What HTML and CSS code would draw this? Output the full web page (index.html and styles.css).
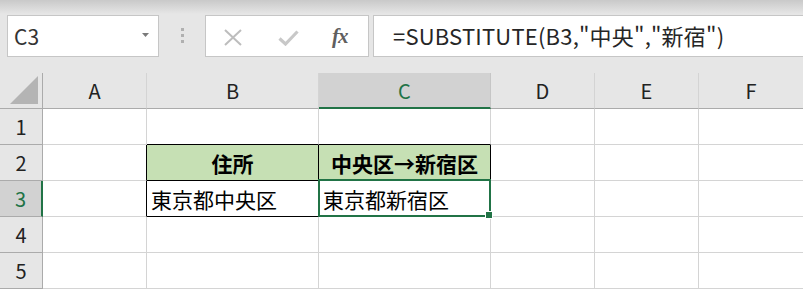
FILE: index.html
```html
<!DOCTYPE html>
<html lang="ja">
<head>
<meta charset="utf-8">
<link rel="stylesheet" href="styles.css">
</head>
<body>
<div class="toolbar">
  <div class="namebox">
    <span class="name">C3</span>
    <svg class="caret" width="7" height="4" viewBox="0 0 7 4"><path d="M0 0h7L3.5 4z" fill="#7a7a7a"/></svg>
  </div>
  <div class="grip"><i></i><i></i><i></i></div>
  <div class="buttons">
    <svg class="btn-x" width="20" height="17" viewBox="0 0 20 17"><path d="M2 1L18 16M18 1L2 16" stroke="#bdbdbd" stroke-width="2" fill="none"/></svg>
    <svg class="btn-ok" width="21" height="16" viewBox="0 0 21 16"><path d="M1.5 8.5L7.5 14L19.5 1.5" stroke="#c8c8c8" stroke-width="3.2" fill="none"/></svg>
    <span class="fx">fx</span>
  </div>
  <div class="formula">=SUBSTITUTE(B3,"中央","新宿")</div>
</div>
<div class="sheet">
  <div class="hd corner"><svg width="30" height="30" viewBox="0 0 30 30"><path d="M29 1V29H1z" fill="#b4b4b4"/></svg></div>
  <div class="hd col">A</div>
  <div class="hd col">B</div>
  <div class="hd col sel-col">C</div>
  <div class="hd col">D</div>
  <div class="hd col">E</div>
  <div class="hd col">F</div>

  <div class="hd row">1</div>
  <div class="c"></div>
  <div class="c bb"></div>
  <div class="c bb"></div>
  <div class="c"></div>
  <div class="c"></div>
  <div class="c"></div>

  <div class="hd row">2</div>
  <div class="c br"></div>
  <div class="c t head">住所</div>
  <div class="c t head">中央区→新宿区</div>
  <div class="c"></div>
  <div class="c"></div>
  <div class="c"></div>

  <div class="hd row sel-row">3</div>
  <div class="c br"></div>
  <div class="c t val">東京都中央区</div>
  <div class="c t val active">東京都新宿区<span class="handle"></span></div>
  <div class="c"></div>
  <div class="c"></div>
  <div class="c"></div>

  <div class="hd row">4</div>
  <div class="c"></div>
  <div class="c"></div>
  <div class="c"></div>
  <div class="c"></div>
  <div class="c"></div>
  <div class="c"></div>

  <div class="hd row">5</div>
  <div class="c"></div>
  <div class="c"></div>
  <div class="c"></div>
  <div class="c"></div>
  <div class="c"></div>
  <div class="c"></div>
</div>
</body>
</html>
```
FILE: styles.css
```css
* { box-sizing: border-box; }
html, body { margin: 0; padding: 0; }
body {
  width: 803px;
  height: 289px;
  overflow: hidden;
  background: linear-gradient(#c9c9c9 0px, #e6e6e6 14px, #e6e6e6 100%);
  font-family: "Noto Sans CJK JP", "Noto Sans", sans-serif;
}
.toolbar {
  display: flex;
  align-items: center;
  height: 73px;
  padding: 0 0 0 7px;
}
.namebox {
  width: 152px;
  height: 42px;
  background: #fff;
  border: 1px solid #c6c6c6;
  display: flex;
  align-items: center;
  justify-content: space-between;
  padding: 0 9px 0 6px;
  margin-top: -1px;
}
.name { font-size: 21px; color: #333; line-height: 1; }
.caret { margin-top: -2px; }
.grip {
  width: 46px;
  display: flex;
  flex-direction: column;
  align-items: center;
  gap: 3px;
  margin-top: -2px;
}
.grip i { display: block; width: 3px; height: 3px; background: #b0b0b0; }
.buttons {
  width: 164px;
  height: 42px;
  background: #fff;
  border: 1px solid #c6c6c6;
  display: flex;
  align-items: center;
  padding: 0 0 0 17px;
  margin-top: -1px;
}
.btn-x { margin-top: 3px; }
.btn-ok { margin-left: 35px; margin-top: 3px; }
.fx {
  margin-left: 33px;
  font-family: "Liberation Serif", "DejaVu Serif", serif;
  font-style: italic;
  font-weight: bold;
  font-size: 21px;
  color: #5f5f5f;
  letter-spacing: -1px;
}
.formula {
  flex: 1;
  height: 42px;
  margin-left: 4px;
  background: #fff;
  border: 1px solid #c6c6c6;
  border-right: none;
  font-size: 22px;
  letter-spacing: 0.2px;
  color: #262626;
  line-height: 38px;
  padding-left: 19px;
  white-space: nowrap;
  margin-top: -1px;
}
.sheet {
  display: grid;
  grid-template-columns: 43px 104px 172px 172px 104px 104px 104px;
  grid-template-rows: repeat(6, 36px);
}
.hd {
  background: #e6e6e6;
  border-right: 1px solid #ababab;
  border-bottom: 1px solid #ababab;
  display: flex;
  align-items: center;
  justify-content: center;
  font-size: 20px;
  color: #222;
}
.col { border-right-color: #d4d4d4; border-top: 0; }
.col:nth-child(7) { border-right: 0; }
.corner { align-items: flex-end; justify-content: flex-end; padding: 0 3px 3px 0; }
.sel-col {
  background: #d2d2d2;
  color: #217346;
  border-bottom: 2px solid #217346;
  border-right-color: #c6c6c6;
}
.row { border-bottom-color: #ababab; }
.sel-row {
  background: #d2d2d2;
  color: #217346;
  border-right: 2px solid #217346;
}
.c {
  background: #fff;
  border-right: 1px solid #d4d4d4;
  border-bottom: 1px solid #d4d4d4;
  font-size: 21px;
  color: #000;
  display: flex;
  align-items: center;
  white-space: nowrap;
}
.c:nth-child(7n) { border-right: 0; }
.bb { border-bottom-color: #000; }
.br { border-right-color: #000; }
.t { border-right-color: #000; border-bottom-color: #000; }
.head {
  background: #c6e0b4;
  font-weight: bold;
  justify-content: center;
}
.val { padding-left: 4px; }
.active { position: relative; padding-left: 4px; }
.active::after {
  content: "";
  position: absolute;
  left: -1px;
  top: -2px;
  right: -1px;
  bottom: -1px;
  border: 2px solid #217346;
}
.handle {
  position: absolute;
  right: -3px;
  bottom: -3px;
  width: 8px;
  height: 8px;
  background: #217346;
  border: 1px solid #fff;
  z-index: 2;
}
```
